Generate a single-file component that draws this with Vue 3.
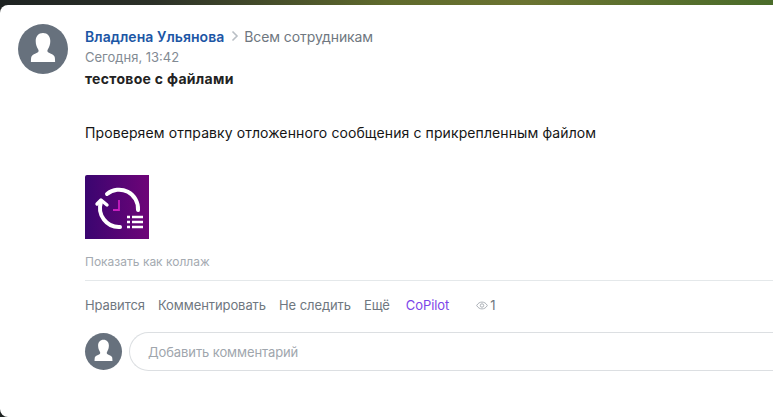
<template>
  <div class="page">
    <div class="card">
      <div class="avatar">
        <svg viewBox="0 0 50 50" width="50" height="50"><path :d="personPath" fill="#fff" /></svg>
      </div>
      <div class="post">
        <div class="head">
          <a class="author">Владлена Ульянова</a>
          <svg class="chevron" viewBox="0 0 8 12" width="8" height="12"><path d="M1.500 1.500 6 6l-4.500 4.500" fill="none" stroke="#b9bfc5" stroke-width="1.600" /></svg>
          <span class="to">Всем сотрудникам</span>
        </div>
        <div class="date">Сегодня, 13:42</div>
        <div class="title">тестовое с файлами</div>
        <div class="text">Проверяем отправку отложенного сообщения с прикрепленным файлом</div>
        <div class="thumb">
          <svg viewBox="0 0 64 64" width="64" height="64">
            <path d="M22 19A19 19 0 0 1 53 35" fill="none" stroke="#fff" stroke-width="4" stroke-linecap="round" />
            <path d="M16 27A19 19 0 0 0 35 52" fill="none" stroke="#fff" stroke-width="4" stroke-linecap="round" />
            <path d="M12 29l4-4 6 5" fill="none" stroke="#fff" stroke-width="3.400" stroke-linecap="round" stroke-linejoin="round" />
            <path d="M34 25v10h-6" fill="none" stroke="#c81fc0" stroke-width="1.800" />
            <path d="M42 42h3M42 47h3M42 52h3" stroke="#fff" stroke-width="2.400" />
            <path d="M47 42h11M47 47h11M47 52h11" stroke="#fff" stroke-width="2.400" />
          </svg>
        </div>
        <div class="collage">Показать как коллаж</div>
        <div class="actions">
          <span v-for="a in actions" :key="a">{{ a }}</span>
          <span class="copilot">CoPilot</span>
          <span class="views">
            <svg viewBox="0 0 14 10" width="12" height="9"><path d="M.8 5C2.300 2.300 4.500 1 7 1s4.700 1.300 6.200 4C11.700 7.700 9.500 9 7 9S2.300 7.700.8 5Z" fill="none" stroke="#a0a6ad" stroke-width="1" /><circle cx="7" cy="5" r="2" fill="none" stroke="#a0a6ad" stroke-width="1" /></svg>
            1
          </span>
        </div>
        <div class="comment">
          <div class="avatar small">
            <svg viewBox="0 0 50 50" width="37" height="37"><path :d="personPath" fill="#fff" /></svg>
          </div>
          <div class="input">Добавить комментарий</div>
        </div>
      </div>
    </div>
  </div>
</template>

<script setup>
const actions = ['Нравится', 'Комментировать', 'Не следить', 'Ещё']
const personPath = 'M25 9c-4.600 0-7.300 3.400-7.300 8 0 3.300 1 6.200 2.400 8.300.8 1.200.7 2.600-.6 3.300-2.600 1.300-5 2-6 3.900-.5 1-.6 4-.6 5.500h24.200c0-1.500-.1-4.500-.6-5.500-1-1.900-3.400-2.600-6-3.900-1.300-.7-1.400-2.100-.6-3.300 1.400-2.100 2.400-5 2.400-8.300 0-4.600-2.700-8-7.300-8Z'
</script>

<style>
html,
body {
  margin: 0;
  height: 100%;
  overflow: hidden;
}
</style>

<style scoped>
.page {
  width: 773px;
  height: 417px;
  padding-top: 5px;
  box-sizing: border-box;
  background: linear-gradient(90deg, #1e2322 0%, #2c3128 20%, #5f6a2c 50%, #6b7331 68%, #4a6c2a 100%);
  font-family: Inter, "Noto Sans", sans-serif;
  overflow: hidden;
}

.card {
  height: 412px;
  box-sizing: border-box;
  padding: 19px 0 0 18px;
  display: flex;
  background: #fff;
  border-radius: 8px 0 0 8px;
}

.avatar {
  flex: none;
  width: 50px;
  height: 50px;
  border-radius: 50%;
  background: #67717d;
  display: flex;
  align-items: center;
  justify-content: center;
}

.avatar.small {
  width: 37px;
  height: 37px;
}

.post {
  flex: 1;
  margin-left: 17px;
}

.head {
  display: flex;
  align-items: center;
  height: 24px;
  font-size: 14px;
}

.author {
  font-weight: 600;
  letter-spacing: 0.05px;
  color: #1c56a5;
}

.chevron {
  margin: 0 5px 0 7px;
}

.to {
  letter-spacing: -0.1px;
  color: #6f7780;
}

.date {
  font-size: 13px;
  line-height: 18px;
  color: #828a93;
}

.title {
  margin-top: 4px;
  font-size: 14px;
  line-height: 18px;
  font-weight: 700;
  letter-spacing: 0.3px;
  color: #222;
}

.text {
  margin-top: 36px;
  font-size: 14px;
  line-height: 18px;
  letter-spacing: 0.1px;
  color: #151515;
}

.thumb {
  margin-top: 33px;
  width: 64px;
  height: 64px;
  border-radius: 2px 0 0 0;
  background: linear-gradient(90deg, #3a0570 0%, #6e0478 100%);
}

.thumb svg {
  display: block;
}

.collage {
  margin-top: 15px;
  padding-bottom: 10px;
  font-size: 12px;
  line-height: 16px;
  color: #a4aab1;
  border-bottom: 1px solid #e4e8ea;
}

.actions {
  display: flex;
  align-items: center;
  margin-top: 15px;
  height: 18px;
  gap: 13px;
  font-size: 13px;
  letter-spacing: -0.08px;
  color: #6f7780;
}

.copilot {
  margin-left: 3px;
  color: #7b46e8;
}

.views {
  display: flex;
  align-items: center;
  gap: 2px;
  margin-left: 14px;
}

.comment {
  display: flex;
  align-items: center;
  gap: 7px;
  margin-top: 18px;
}

.input {
  flex: 1;
  height: 39px;
  box-sizing: border-box;
  padding-left: 18px;
  display: flex;
  align-items: center;
  border: 1px solid #dcdfe2;
  border-right: 0;
  border-radius: 20px 0 0 20px;
  font-size: 13px;
  letter-spacing: -0.1px;
  color: #a0a6ad;
}
</style>
